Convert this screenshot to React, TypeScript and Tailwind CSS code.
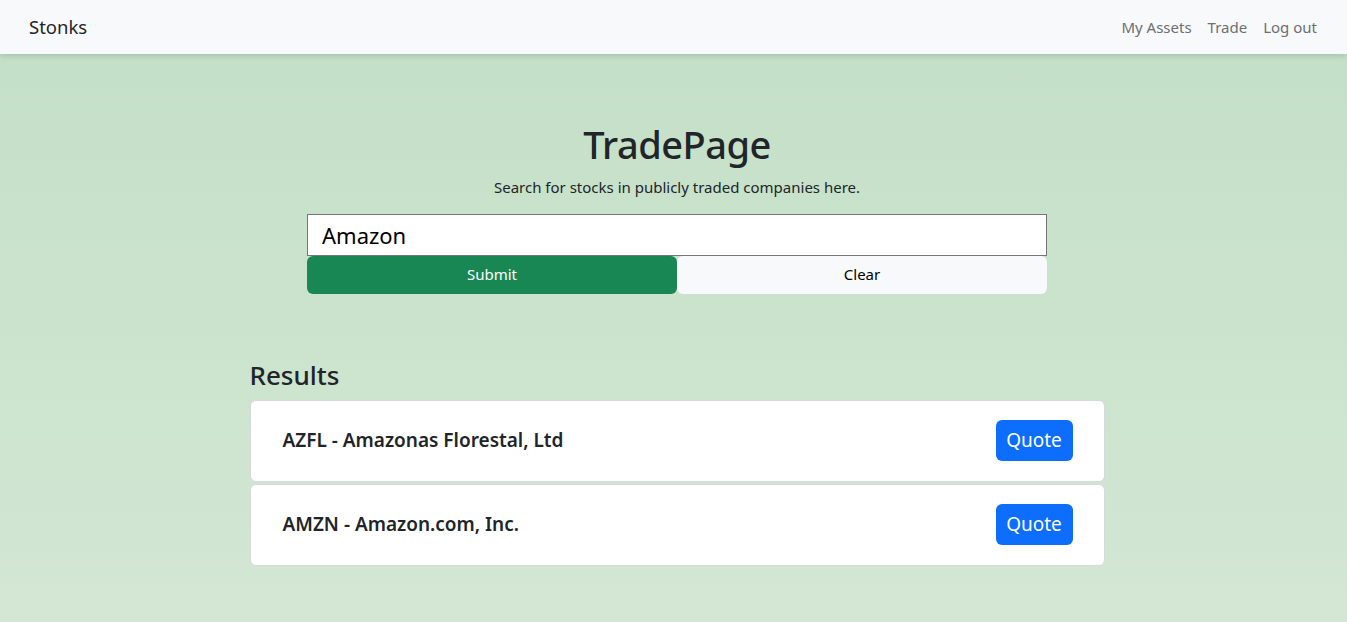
const results = [
  { symbol: "AZFL", name: "Amazonas Florestal, Ltd" },
  { symbol: "AMZN", name: "Amazon.com, Inc." },
];

function NavBar() {
  return (
    <nav className="relative z-10 flex h-[54px] items-center justify-between bg-[#f8f9fa] pl-[29px] pr-[30px] shadow-[0_2px_6px_rgba(0,0,0,0.15)]">
      <span className="text-[18.5px] text-[#212529]">Stonks</span>
      <div className="flex items-center gap-4 text-[15px] text-[#6c6f73]">
        <a href="#">My Assets</a>
        <a href="#">Trade</a>
        <a href="#">Log out</a>
      </div>
    </nav>
  );
}

function ResultCard({ symbol, name }: { symbol: string; name: string }) {
  return (
    <div className="flex h-[82px] items-center justify-between rounded-md border border-[#d6d9dc] bg-white pl-[32px] pr-[31px]">
      <span className="text-[19px] font-semibold text-[#212529]">
        {symbol} - {name}
      </span>
      <button className="h-[41px] w-[77px] rounded-md bg-[#0d6efd] text-[19px] text-white">
        Quote
      </button>
    </div>
  );
}

export default function App() {
  return (
    <div
      className="flex min-h-[622px] flex-col bg-gradient-to-b from-[#c3dfc6] to-[#d3e7d4] text-[#212529]"
      style={{ fontFamily: '"Noto Sans", "Open Sans", sans-serif' }}
    >
      <NavBar />
      <main className="flex flex-col items-center pl-[7px] pt-[64px]">
        <h1 className="text-[38px] font-medium leading-[52px] tracking-[-0.5px]">TradePage</h1>
        <p className="mt-[6px] text-[15px]">Search for stocks in publicly traded companies here.</p>
        <div className="mt-[15px] w-[740px]">
          <input
            className="block h-[42px] w-full border border-[#767676] bg-white px-[14px] text-[22px] text-black outline-none"
            defaultValue="Amazon"
          />
          <div className="flex h-[38px]">
            <button className="flex-1 rounded-md bg-[#198754] text-[15px] text-white">Submit</button>
            <button className="flex-1 rounded-md bg-[#f8f9fa] text-[15px] text-black">Clear</button>
          </div>
        </div>
        <section className="mt-[62px] w-[855px]">
          <h3 className="text-[26px] font-medium leading-[38px]">Results</h3>
          <div className="mt-[6px] flex flex-col gap-[2px]">
            {results.map((r) => (
              <ResultCard key={r.symbol} {...r} />
            ))}
          </div>
        </section>
      </main>
    </div>
  );
}
